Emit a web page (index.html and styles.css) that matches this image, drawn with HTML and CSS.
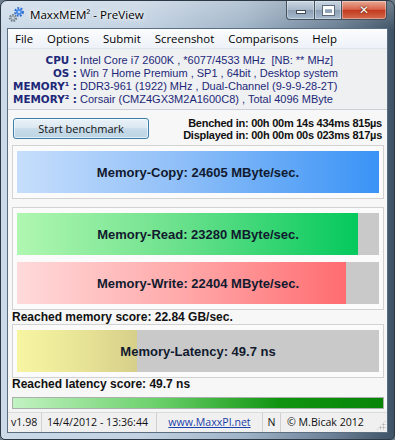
FILE: index.html
```html
<!DOCTYPE html>
<html>
<head>
<meta charset="utf-8">
<link rel="stylesheet" href="styles.css">
</head>
<body>
<div class="window">
  <div class="titlebar">
    <svg class="app-icon" width="17" height="17" viewBox="0 0 17 17">
      <circle cx="11" cy="6" r="3.6" fill="none" stroke="#2f6fd0" stroke-width="2.6" stroke-dasharray="1.7 1.3"/>
      <circle cx="11" cy="6" r="3" fill="#4f8fe8"/>
      <circle cx="11" cy="6" r="1.1" fill="#d8e6f6"/>
      <circle cx="5" cy="12" r="3" fill="none" stroke="#6e7a86" stroke-width="2.2" stroke-dasharray="1.5 1.1"/>
      <circle cx="5" cy="12" r="2.4" fill="#9aa6b2"/>
      <circle cx="5" cy="12" r="0.9" fill="#e6eaee"/>
    </svg>
    <span class="title">MaxxMEM² - PreView</span>
    <div class="caption-buttons">
      <div class="cap cap-min"><span class="glyph-min"></span></div>
      <div class="cap cap-max"><span class="glyph-max"></span></div>
      <div class="cap cap-close"><span class="glyph-close">✕</span></div>
    </div>
  </div>
  <div class="client">
    <div class="menubar">
      <span class="menu-item">File</span>
      <span class="menu-item">Options</span>
      <span class="menu-item">Submit</span>
      <span class="menu-item">Screenshot</span>
      <span class="menu-item">Comparisons</span>
      <span class="menu-item">Help</span>
    </div>
    <div class="info">
      <span class="info-label">CPU :</span><span class="info-value">Intel Core i7 2600K , *6077/4533 MHz &nbsp;[NB: ** MHz]</span>
      <span class="info-label">OS :</span><span class="info-value">Win 7 Home Premium , SP1 , 64bit , Desktop system</span>
      <span class="info-label">MEMORY¹ :</span><span class="info-value">DDR3-961 (1922) MHz , Dual-Channel (9-9-9-28-2T)</span>
      <span class="info-label">MEMORY² :</span><span class="info-value">Corsair (CMZ4GX3M2A1600C8) , Total 4096 MByte</span>
    </div>
    <div class="content">
      <div class="bench-row">
        <div class="btn">Start benchmark</div>
        <div class="times">
          <div>Benched in: 00h 00m 14s 434ms 815µs</div>
          <div>Displayed in: 00h 00m 00s 023ms 817µs</div>
        </div>
      </div>
      <div class="group group-first">
        <div class="bar">
          <div class="fill fill-copy" style="width:100%"></div>
          <div class="bar-label">Memory-Copy: 24605 MByte/sec.</div>
        </div>
      </div>
      <div class="group group-mem">
        <div class="bar">
          <div class="fill fill-read" style="width:94.2%"></div>
          <div class="bar-label">Memory-Read: 23280 MByte/sec.</div>
        </div>
        <div class="bar">
          <div class="fill fill-write" style="width:90.9%"></div>
          <div class="bar-label">Memory-Write: 22404 MByte/sec.</div>
        </div>
      </div>
      <div class="score">Reached memory score: 22.84 GB/sec.</div>
      <div class="group">
        <div class="bar">
          <div class="fill fill-lat" style="width:33.2%"></div>
          <div class="bar-label">Memory-Latency: 49.7 ns</div>
        </div>
      </div>
      <div class="score score-lat">Reached latency score: 49.7 ns</div>
      <div class="progress"></div>
    </div>
    <div class="statusbar">
      <span class="sb sb-left">v1.98</span>
      <span class="sb sb-left2">14/4/2012 - 13:36:44</span>
      <span class="sb sb-center"><span class="link">www.MaxxPI.net</span></span>
      <span class="sb sb-center">N</span>
      <span class="sb sb-last">© M.Bicak 2012<span class="grip"></span></span>
    </div>
  </div>
</div>
</body>
</html>
```

FILE: styles.css
```css
* { box-sizing: border-box; }

body {
  margin: 0;
  width: 395px;
  height: 440px;
  overflow: hidden;
  background: #6d7c8b;
}

.window {
  width: 395px;
  height: 440px;
  border: 1px solid #2c3945;
  border-radius: 7px 7px 5px 5px;
  padding: 0 6px 6px;
  background:
    linear-gradient(to bottom, rgba(255,255,255,0.25), rgba(255,255,255,0) 30px),
    linear-gradient(to right, #ccdae8 0%, #c2d2e2 35%, #9fb3c7 62%, #6a7f94 85%, #3f5366 100%);
  display: flex;
  flex-direction: column;
}

.titlebar {
  height: 27px;
  display: flex;
  align-items: flex-start;
  padding-left: 1px;
}

.app-icon {
  margin-top: 5px;
  margin-right: 5px;
}

.title {
  margin-top: 6px;
  font-family: "Open Sans", sans-serif;
  font-size: 11.6px;
  line-height: 16px;
  color: #000;
  text-shadow: 0 0 6px rgba(255,255,255,0.95), 0 0 3px rgba(255,255,255,0.9);
}

.caption-buttons {
  margin-left: auto;
  margin-right: 1px;
  display: flex;
}

.cap {
  height: 19px;
  border: 1px solid #44515f;
  border-top: none;
  display: flex;
  align-items: center;
  justify-content: center;
  box-shadow: inset 0 0 0 1px rgba(255,255,255,0.35);
}

.cap-min {
  width: 28px;
  border-radius: 0 0 0 4px;
  border-right: none;
  background: linear-gradient(#c9d5e2 0%, #a9b9ca 48%, #8c9fb3 52%, #a6bacd 100%);
}

.cap-max {
  width: 27px;
  border-right: none;
  background: linear-gradient(#c9d5e2 0%, #a9b9ca 48%, #8c9fb3 52%, #a6bacd 100%);
}

.cap-close {
  width: 46px;
  border-radius: 0 0 4px 0;
  background: linear-gradient(#e9a995 0%, #d8664d 46%, #c43a1f 52%, #d46b4e 100%);
}

.glyph-min {
  width: 10px;
  height: 4px;
  margin-top: 4px;
  background: #fff;
  border: 1px solid #3d4b59;
}

.glyph-max {
  width: 11px;
  height: 9px;
  border: 2px solid #fff;
  border-top-width: 3px;
  outline: 1px solid #5b6b7b;
}

.glyph-close {
  color: #fff;
  font-family: "DejaVu Sans", sans-serif;
  font-weight: bold;
  font-size: 12px;
  line-height: 12px;
  text-shadow: 0 0 2px #5a1a0a, 0 0 1px #5a1a0a;
}

.client {
  flex: 1;
  border: 1px solid #5b6d80;
  background: #f4f4f4;
  display: flex;
  flex-direction: column;
}

.menubar {
  height: 20px;
  display: flex;
  align-items: center;
  background: linear-gradient(#fbfcfe, #eef2f8);
  border-bottom: 1px solid #dde4ec;
  font-family: "Open Sans", sans-serif;
  font-size: 11.4px;
  color: #000;
}

.menu-item {
  padding: 0 7px;
  line-height: 18px;
}

.info {
  height: 61px;
  padding: 5px 0 3px;
  background: #eef0f2;
  border-bottom: 1px solid #cbd0d6;
  display: grid;
  grid-template-columns: 69px 1fr;
  grid-auto-rows: 13px;
  line-height: 13px;
  color: #1d2878;
}

.info-label {
  text-align: right;
  font-family: "DejaVu Sans", sans-serif;
  font-weight: bold;
  font-size: 10.4px;
}

.info-value {
  padding-left: 3px;
  font-family: "Liberation Sans", sans-serif;
  font-size: 11px;
  white-space: nowrap;
}

.content {
  padding: 0 3px 0 4px;
  display: flex;
  flex-direction: column;
  background: #f7f7f7;
}

.bench-row {
  height: 35px;
  padding: 2px 2px 0 1px;
  display: flex;
  align-items: center;
  justify-content: space-between;
}

.btn {
  width: 136px;
  height: 21px;
  border: 1px solid #3c7fab;
  border-radius: 3px;
  background: linear-gradient(#eaf2f8 0%, #dce8f1 45%, #c7dbe9 52%, #bdd5e5 100%);
  box-shadow: inset 0 0 0 1px rgba(255,255,255,0.6);
  font-family: "Open Sans", sans-serif;
  font-size: 11px;
  line-height: 19px;
  text-align: center;
  color: #111;
}

.times {
  text-align: right;
  font-family: "Liberation Sans", sans-serif;
  font-weight: bold;
  font-size: 11px;
  line-height: 12px;
  letter-spacing: -0.25px;
  color: #111;
}

.group {
  border: 1px solid #d2d2d2;
  background: #fbfbfb;
  padding: 5px 4px;
  display: flex;
  flex-direction: column;
  gap: 7px;
}

.group-mem {
  margin-top: 8px;
}

.bar {
  height: 42px;
  display: grid;
  background: #c9c9c9;
}

.fill, .bar-label {
  grid-area: 1 / 1;
}

.fill { height: 100%; }

.fill-copy { background: linear-gradient(to right, #c6defc 0%, #8fbff8 45%, #3a93f6 100%); }
.fill-read { background: linear-gradient(to right, #b0f7b1 0%, #6fe28e 45%, #04c95c 100%); }
.fill-write { background: linear-gradient(to right, #ffdada 0%, #ffa9aa 50%, #ff6c70 100%); }
.fill-lat { background: linear-gradient(to right, #f7f5a2 0%, #e9e597 50%, #d6cf8a 100%); }

.bar-label {
  align-self: center;
  justify-self: center;
  font-family: "Liberation Sans", sans-serif;
  font-weight: bold;
  font-size: 13px;
  color: #111a2e;
}

.score {
  padding-top: 1px;
  line-height: 13px;
  font-family: "Liberation Sans", sans-serif;
  font-weight: bold;
  font-size: 12px;
  color: #111;
}

.score-lat {
  padding-top: 0;
}

.progress {
  margin-top: 6px;
  height: 12px;
  border: 1px solid #a9b0a9;
  background: linear-gradient(to right, #c2f2c2 0%, #68cf68 40%, #109410 72%, #078507 100%);
}

.statusbar {
  margin-top: auto;
  height: 20px;
  display: grid;
  grid-template-columns: 34px 115px 106px 18px 1fr;
  background: #f0f0f0;
  border-top: 1px solid #dadada;
  font-family: "Open Sans", sans-serif;
  font-size: 10.6px;
  line-height: 18px;
  color: #111;
}

.sb {
  border-right: 1px solid #d0d0d0;
  white-space: nowrap;
}

.sb-left { padding-left: 3px; }
.sb-left2 { padding-left: 5px; }
.sb-center { text-align: center; }
.sb-last {
  border-right: none;
  padding-left: 6px;
  display: flex;
}

.link {
  color: #1a3fa8;
  text-decoration: underline;
}

.grip {
  margin-left: auto;
  width: 10px;
  height: 10px;
  margin-top: 7px;
  margin-right: 1px;
  background: radial-gradient(circle, #b0b0b0 0.8px, transparent 1.2px) 0 0 / 3px 3px;
  clip-path: polygon(100% 0, 100% 100%, 0 100%);
}
```
